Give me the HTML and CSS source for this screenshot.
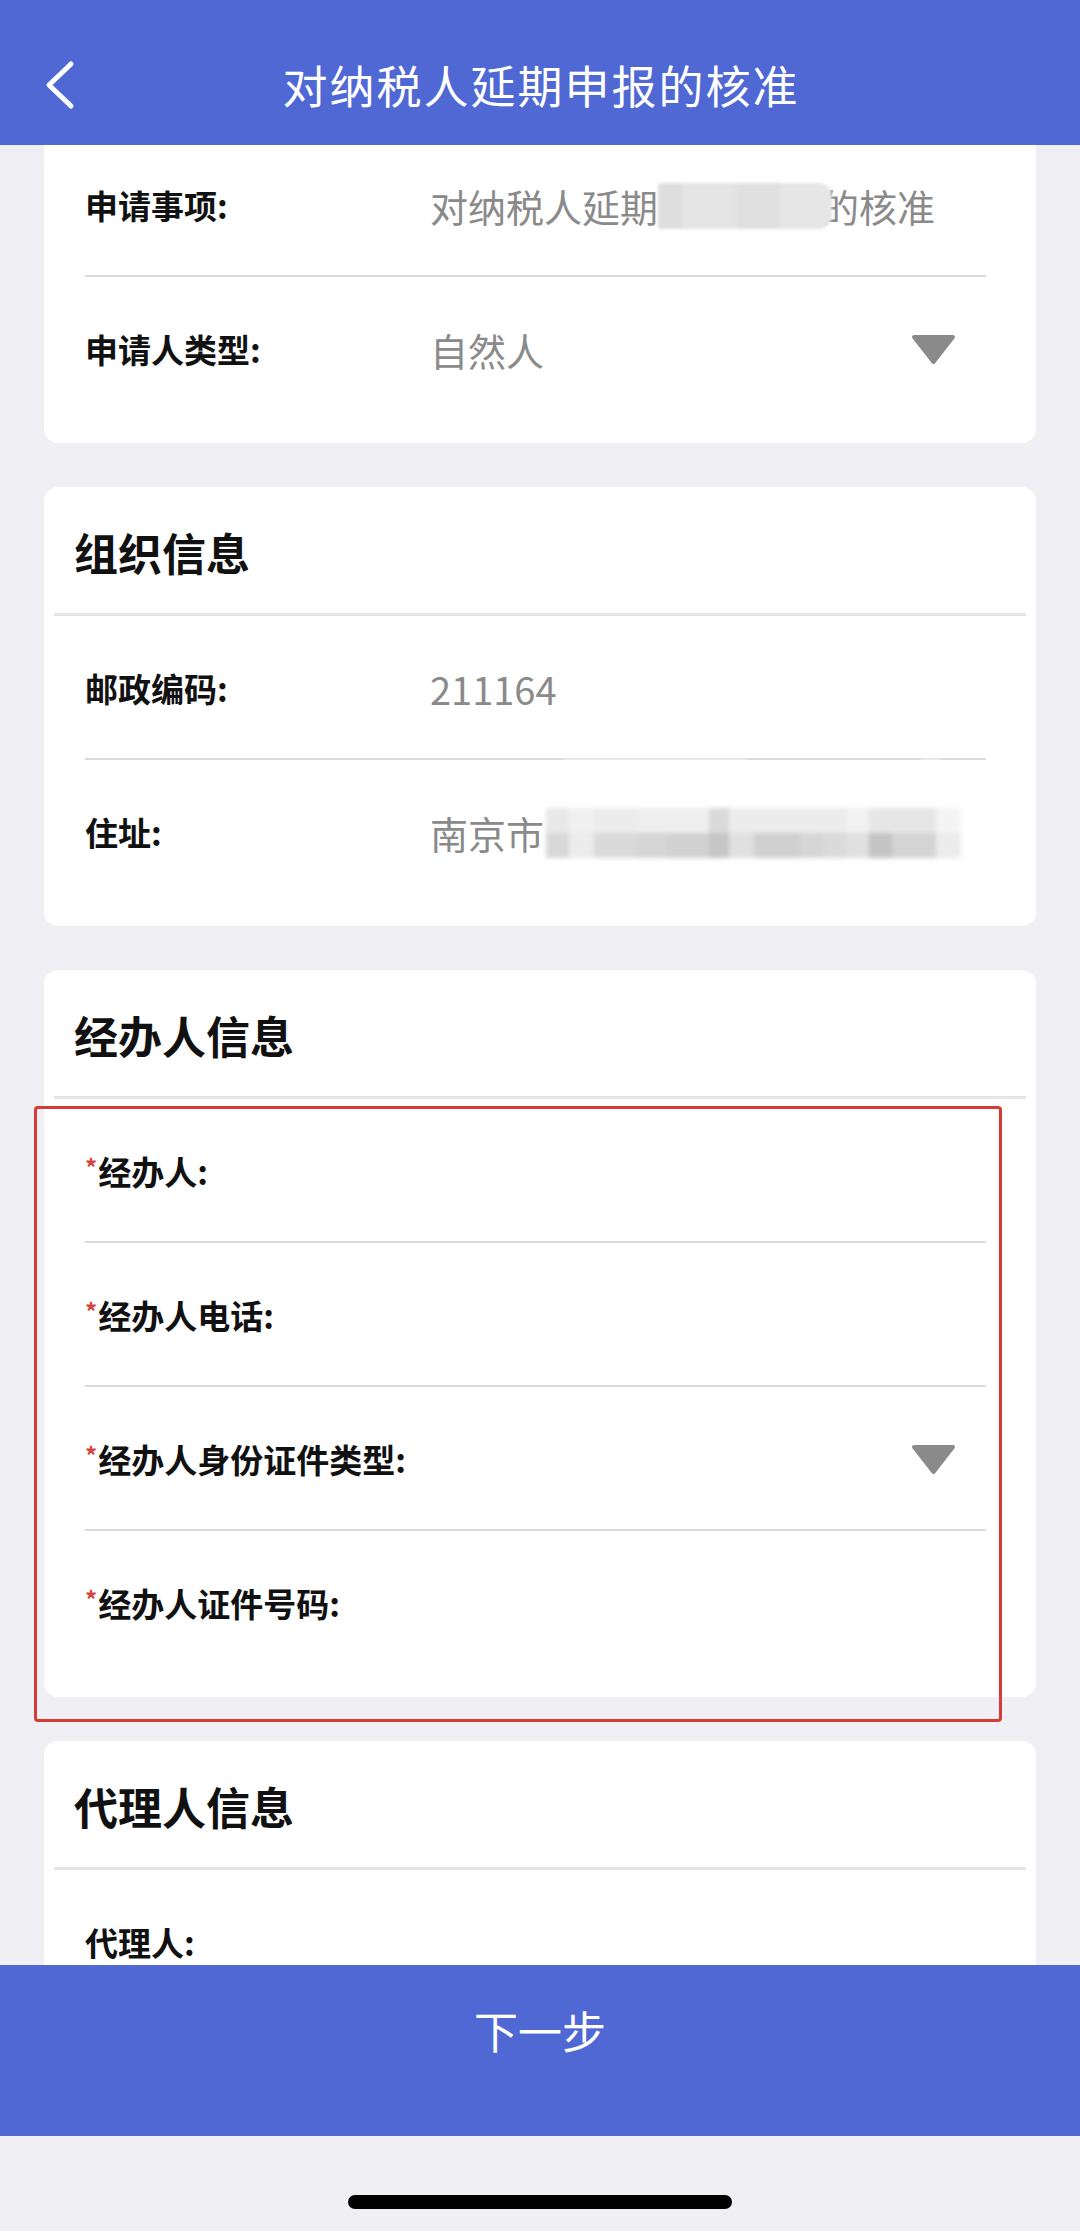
FILE: index.html
```html
<!DOCTYPE html>
<html lang="zh-CN">
<head>
<meta charset="utf-8">
<title>对纳税人延期申报的核准</title>
<link rel="stylesheet" href="styles.css">
</head>
<body>
<div class="screen">
  <header class="topbar">
    <span class="back">
      <svg width="40" height="50" viewBox="0 0 40 50"><polyline points="31,4 9,25 31,46" fill="none" stroke="#ffffff" stroke-width="5" stroke-linecap="round" stroke-linejoin="round"/></svg>
    </span>
    <h1 class="title">对纳税人延期申报的核准</h1>
    <span class="spacer"></span>
  </header>

  <main class="content">
    <section class="card card--first">
      <div class="row">
        <span class="label">申请事项:</span>
        <span class="value">对纳税人延期<span class="redact"></span>的核准</span>
      </div>
      <div class="row">
        <span class="label">申请人类型:</span>
        <span class="value">自然人</span>
        <svg class="caret" width="45" height="31" viewBox="0 0 45 31"><polygon points="3,3 42,3 22.5,28" fill="#8a8a8a" stroke="#8a8a8a" stroke-width="4" stroke-linejoin="round"/></svg>
      </div>
    </section>

    <section class="card">
      <div class="card-title">组织信息</div>
      <div class="row">
        <span class="label">邮政编码:</span>
        <span class="value">211164</span>
      </div>
      <div class="row">
        <span class="label">住址:</span>
        <span class="value">南京市<span class="mosaic"></span></span>
      </div>
    </section>

    <section class="card">
      <div class="card-title">经办人信息</div>
      <div class="row">
        <span class="label"><span class="req">*</span>经办人:</span>
      </div>
      <div class="row">
        <span class="label"><span class="req">*</span>经办人电话:</span>
      </div>
      <div class="row">
        <span class="label label--wide"><span class="req">*</span>经办人身份证件类型:</span>
        <svg class="caret" width="45" height="31" viewBox="0 0 45 31"><polygon points="3,3 42,3 22.5,28" fill="#8a8a8a" stroke="#8a8a8a" stroke-width="4" stroke-linejoin="round"/></svg>
      </div>
      <div class="row">
        <span class="label"><span class="req">*</span>经办人证件号码:</span>
      </div>
    </section>

    <section class="card">
      <div class="card-title">代理人信息</div>
      <div class="row">
        <span class="label">代理人:</span>
      </div>
    </section>
  </main>

  <div class="actionbar"><span class="action-text">下一步</span></div>
  <div class="homebar"><span class="indicator"></span></div>

  <div class="highlight"></div>
</div>
</body>
</html>
```

FILE: styles.css
```css
* { box-sizing: border-box; }

html, body {
  margin: 0;
  padding: 0;
  background: #efeff4;
}

body {
  font-family: "Noto Sans CJK SC", "Noto Sans", "Liberation Sans", sans-serif;
  color: #111111;
}

.screen {
  position: relative;
  width: 1080px;
  height: 2231px;
  overflow: hidden;
  background: #efeff4;
  display: flex;
  flex-direction: column;
}

/* ---------- top bar ---------- */
.topbar {
  flex: 0 0 145px;
  height: 145px;
  background: #5068d4;
  padding-top: 24px;
  display: grid;
  grid-template-columns: 1fr auto 1fr;
  align-items: center;
  position: relative;
  z-index: 2;
}

.back {
  justify-self: start;
  margin-left: 40px;
  display: flex;
}

.title {
  margin: 0;
  font-size: 45px;
  font-weight: 400;
  line-height: 1;
  color: #ffffff;
  letter-spacing: 2px;
  padding-left: 2px;
  white-space: nowrap;
}

/* ---------- scrolled content ---------- */
.content {
  flex: 0 0 1820px;
  height: 1820px;
  overflow: hidden;
  padding: 0 44px;
}

.card {
  background: #ffffff;
  border-radius: 14px;
  margin-top: 44px;
  padding-bottom: 22px;
}

.card--first {
  margin-top: -12px;
  border-radius: 0 0 14px 14px;
}

.card-title {
  height: 129px;
  margin: 0 10px;
  padding: 4px 0 0 20px;
  border-bottom: 3px solid #e5e5e8;
  display: flex;
  align-items: center;
  font-size: 44px;
  font-weight: 700;
  line-height: 1.2;
  color: #111111;
}

.row {
  height: 144px;
  margin: 0 50px 0 41px;
  padding-top: 3px;
  border-bottom: 2px solid #dcdcdc;
  display: flex;
  align-items: center;
}

.card .row:last-child {
  border-bottom: none;
  padding-bottom: 2px;
}

.label {
  flex: 0 0 345px;
  font-size: 33px;
  font-weight: 700;
  line-height: 1.2;
  color: #111111;
  white-space: nowrap;
}

.label--wide {
  flex: 0 0 auto;
}

.req {
  display: inline-block;
  font-size: 24px;
  font-weight: 700;
  color: #d2453f;
  vertical-align: 8px;
  margin-right: 1px;
}

.value {
  font-size: 38px;
  font-weight: 400;
  line-height: 1.2;
  color: #8a8a8a;
  white-space: nowrap;
  display: flex;
  align-items: center;
}

.caret {
  margin-left: auto;
  margin-right: 30px;
  flex: 0 0 auto;
}

/* redaction blur on the subject name */
.redact {
  display: inline-block;
  position: relative;
  z-index: 1;
  width: 174px;
  height: 46px;
  margin-right: -11px;
  background:
    linear-gradient(to right, #dedede 0 14%, #e4e4e4 14% 45%, #e0e0e0 45% 70%, #e6e6e6 70% 100%);
  border-radius: 3px 14px 14px 3px;
  filter: blur(1.5px);
}

/* mosaic on the address */
.mosaic {
  display: inline-block;
  position: relative;
  width: 415px;
  height: 50px;
  margin-left: 2px;
  background:
    linear-gradient(to right,
      #e8e8e8 0 5.5%, #f0f0f0 5.5% 11.5%, #ececec 11.5% 21.7%, #eeeeee 21.7% 39.2%,
      #dadada 39.2% 44.2%, #ececec 44.2% 72.4%, #f2f2f2 72.4% 77.9%, #e6e6e6 77.9% 94%,
      #f4f4f4 94% 100%) top / 100% 50% no-repeat,
    linear-gradient(to right,
      #d8d8d8 0 5.5%, #ececec 5.5% 11.5%, #dadada 11.5% 21.7%, #d6d6d6 21.7% 29%,
      #d2d2d2 29% 39.2%, #c6c6c6 39.2% 44.2%, #e0e0e0 44.2% 50.2%, #d0d0d0 50.2% 61.3%,
      #d6d6d6 61.3% 66.8%, #dadada 66.8% 72.4%, #e0e0e0 72.4% 77.9%, #c4c4c4 77.9% 83.4%,
      #d4d4d4 83.4% 94%, #ececec 94% 100%) bottom / 100% 50% no-repeat;
  filter: blur(2px);
}

.mosaic::before,
.mosaic::after {
  content: "";
  position: absolute;
  top: -48px;
  height: 26px;
  background: #ffffff;
}

.mosaic::before {
  left: 18px;
  width: 182px;
}

.mosaic::after {
  left: 375px;
  width: 20px;
}

/* ---------- bottom ---------- */
.actionbar {
  flex: 0 0 171px;
  height: 171px;
  background: #5068d4;
  display: flex;
  justify-content: center;
  align-items: flex-start;
  padding-top: 38px;
}

.action-text {
  font-size: 44px;
  line-height: 54px;
  color: #ffffff;
  font-weight: 400;
}

.homebar {
  flex: 1 1 auto;
  display: flex;
  justify-content: center;
  align-items: flex-start;
  padding-top: 59px;
  background: #efeff4;
}

.indicator {
  width: 384px;
  height: 14px;
  border-radius: 7px;
  background: #000000;
}

/* red annotation frame */
.highlight {
  position: absolute;
  left: 34px;
  top: 1106px;
  width: 968px;
  height: 616px;
  border: 3px solid #d63b36;
  border-radius: 4px;
  pointer-events: none;
  z-index: 3;
}
```
